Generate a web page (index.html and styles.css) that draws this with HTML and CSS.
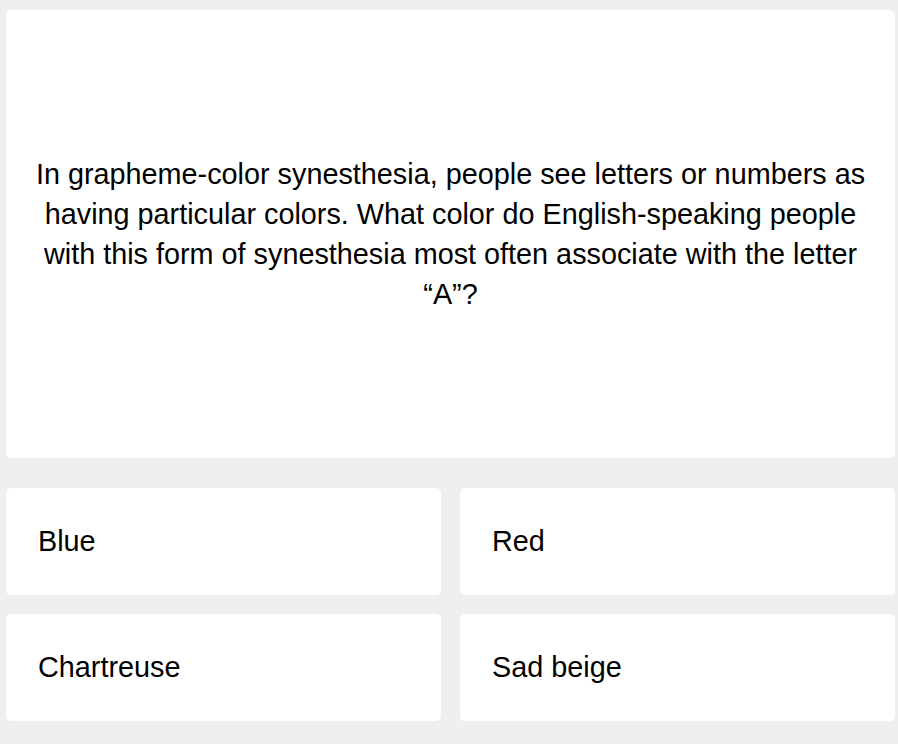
FILE: index.html
```html
<!DOCTYPE html>
<html>
<head>
<meta charset="utf-8">
<link rel="stylesheet" href="styles.css">
</head>
<body>
<main class="quiz">
  <section class="question">
    <p>In grapheme-color synesthesia, people see letters or numbers as having particular colors. What color do English-speaking people with this form of synesthesia most often associate with the letter “A”?</p>
  </section>
  <section class="answers">
    <button class="answer">Blue</button>
    <button class="answer">Red</button>
    <button class="answer">Chartreuse</button>
    <button class="answer">Sad beige</button>
  </section>
</main>
</body>
</html>
```
FILE: styles.css
```css
html, body {
  margin: 0;
  padding: 0;
  background: #efefef;
}
body {
  font-family: "Liberation Sans", Arial, Helvetica, sans-serif;
  color: #000;
}
.quiz {
  padding: 10px 3px 0 6px;
  display: flex;
  flex-direction: column;
  gap: 30px;
}
.question {
  background: #fff;
  border-radius: 5px;
  height: 448px;
  display: flex;
  align-items: center;
  justify-content: center;
  padding: 0 28px;
  box-sizing: border-box;
}
.question p {
  margin: 0;
  text-align: center;
  font-size: 28.8px;
  line-height: 40px;
}
.answers {
  display: grid;
  grid-template-columns: 1fr 1fr;
  gap: 19px;
}
.answer {
  background: #fff;
  border: none;
  border-radius: 5px;
  height: 107px;
  text-align: left;
  padding: 0 32px;
  font-family: inherit;
  font-size: 28.8px;
  color: #000;
}
```
